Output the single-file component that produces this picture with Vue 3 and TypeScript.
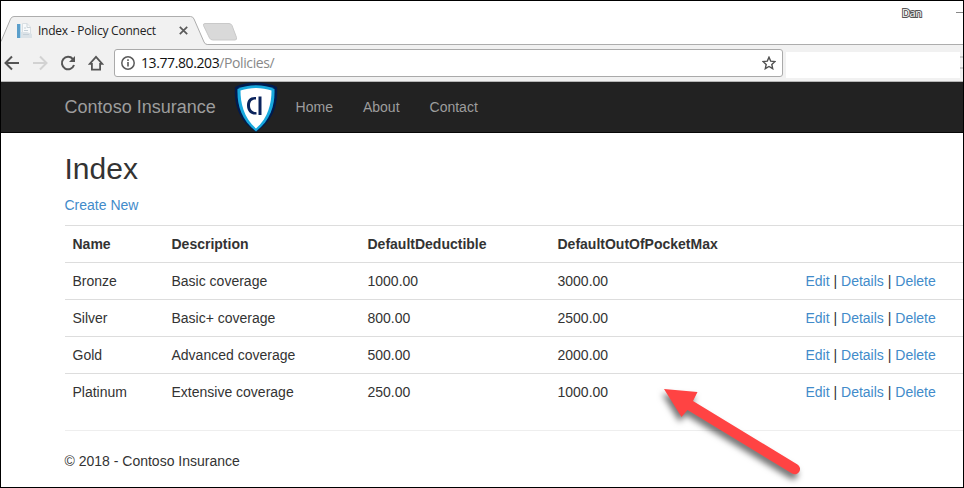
<script setup lang="ts">
interface Policy {
  name: string
  description: string
  deductible: string
  outOfPocketMax: string
}

const navLinks: string[] = ['Home', 'About', 'Contact']
const actions: string[] = ['Edit', 'Details', 'Delete']
const policies: Policy[] = [
  { name: 'Bronze', description: 'Basic coverage', deductible: '1000.00', outOfPocketMax: '3000.00' },
  { name: 'Silver', description: 'Basic+ coverage', deductible: '800.00', outOfPocketMax: '2500.00' },
  { name: 'Gold', description: 'Advanced coverage', deductible: '500.00', outOfPocketMax: '2000.00' },
  { name: 'Platinum', description: 'Extensive coverage', deductible: '250.00', outOfPocketMax: '1000.00' },
]
</script>

<template>
  <div class="window">
    <header class="tabstrip">
      <div class="tab">
        <svg class="tab-shape" width="240" height="29" viewBox="0 0 240 29">
          <path d="M0 29V25.5L9.500 3Q10.500 .5 13 .5H189.500Q192 .5 193 3L203 26Q204 28.500 206.500 28.500H240V29Z" fill="#f1f1f1" />
          <path d="M0 25.500L9.500 3Q10.500 .5 13 .5H189.500Q192 .5 193 3L203 26Q204 28.500 206.500 28.500H240" fill="none" stroke="#adadad" />
          <path d="M204 7.500H228Q230 7.500 231 9.500L235.500 21.500Q236 24 234 24H212Q209.500 24 208.500 22L202.500 9.500Q202 7.500 204 7.500Z" fill="#d9d9d9" stroke="#c9c9c9" />
        </svg>
        <div class="tab-content">
          <svg class="favicon" width="16" height="16" viewBox="0 0 16 16">
            <path d="M1 1H4V15H1Z" fill="#5b9fcb" />
            <path d="M4 1H5V15H4Z" fill="#b8d8ea" />
            <path d="M6.500 .5H11L14.500 4V12.500H6.500Z" fill="#f8fafb" stroke="#d9dfe3" />
            <path d="M11 .5V4.500H14.500" fill="none" stroke="#ccd4d9" />
            <path d="M5 9H11L16 11V15H5Z" fill="#dbe2e7" />
            <path d="M8 5H10M8 7.500H12M7 11.500H13" stroke="#c5d0d8" />
          </svg>
          <span class="tab-title">Index - Policy Connect</span>
          <svg class="close" width="9" height="9" viewBox="0 0 9 9"><path d="M.8 .8L8.200 8.200M8.200 .8L.8 8.200" stroke="#5a5a5a" stroke-width="1.700" /></svg>
        </div>
      </div>
      <div class="caption">
        <span class="user">Dan</span>
        <span class="minimize"></span>
      </div>
    </header>

    <div class="toolbar">
      <div class="controls">
        <svg width="16" height="16" viewBox="0 0 16 16"><path d="M15 8H2M8 1.500L1.500 8L8 14.500" fill="none" stroke="#555" stroke-width="2" /></svg>
        <svg width="16" height="16" viewBox="0 0 16 16"><path d="M1 8H14M8 1.500L14.500 8L8 14.500" fill="none" stroke="#d2d2d2" stroke-width="2" /></svg>
        <svg width="16" height="16" viewBox="0 0 16 16"><path d="M12.800 4A6.200 6.200 0 1 0 14 10" fill="none" stroke="#555" stroke-width="2" /><path d="M15 1V7H9Z" fill="#555" /></svg>
        <svg width="16" height="16" viewBox="0 0 16 16"><path d="M3.900 8.900V14.600H12.100V8.900H14.300L8 1.900L1.700 8.900Z" fill="none" stroke="#555" stroke-width="1.800" /></svg>
      </div>
      <div class="omnibox">
        <svg width="14" height="14" viewBox="0 0 14 14"><circle cx="7" cy="7" r="6.200" fill="none" stroke="#5a5a5a" stroke-width="1.500" /><path d="M7 6V10.500M7 3.200V4.900" stroke="#5a5a5a" stroke-width="1.600" /></svg>
        <span class="url">13.77.80.203<span class="path">/Policies/</span></span>
        <svg class="star" width="14" height="14" viewBox="0 0 14 14"><path d="M7 1.200L8.700 5.100L13 5.500L9.800 8.400L10.700 12.700L7 10.500L3.300 12.700L4.200 8.400L1 5.500L5.300 5.100Z" fill="none" stroke="#505050" stroke-width="1.400" /></svg>
      </div>
      <div class="extensions"></div>
      <div class="menu"><i></i><i></i></div>
    </div>

    <nav class="navbar">
      <a class="brand">Contoso Insurance</a>
      <svg class="logo" width="44" height="50" viewBox="0 0 44 50">
        <path d="M1 5C12 -1 32 -1 43 5C44 22 40 38 22 50C4 38 0 22 1 5Z" fill="#011b4e" />
        <path d="M3.500 7C14 2 30 2 40.500 7C41 22 37.500 37 22 49.500C6.500 37 3 22 3.500 7Z" fill="#18a8dd" />
        <path d="M6.500 8.500C16 5 28 5 37.500 8.500C37.500 21 34.500 35.500 22 46.500C9.500 35.500 6.500 21 6.500 8.500Z" fill="#fff" />
        <path d="M22 15C16 14.500 13 18 13 23.500C13 29.500 17 33 22.500 32.500V30.200C18 30 16 27 16 23.500C16 19.500 18 17.300 22 17.600Z" fill="#0a235c" />
        <path d="M24.500 14.500H27.500V33H24.500Z" fill="#0a235c" />
      </svg>
      <a v-for="link in navLinks" :key="link" class="nav-link">{{ link }}</a>
    </nav>

    <main class="content">
      <h2>Index</h2>
      <p><a class="link">Create New</a></p>
      <table>
        <colgroup><col class="c1"><col class="c2"><col class="c3"><col class="c4"><col></colgroup>
        <thead>
          <tr><th>Name</th><th>Description</th><th>DefaultDeductible</th><th>DefaultOutOfPocketMax</th><th></th></tr>
        </thead>
        <tbody>
          <tr v-for="policy in policies" :key="policy.name">
            <td>{{ policy.name }}</td>
            <td>{{ policy.description }}</td>
            <td>{{ policy.deductible }}</td>
            <td>{{ policy.outOfPocketMax }}</td>
            <td><template v-for="(action, i) in actions" :key="action"><template v-if="i > 0"> | </template><a class="link">{{ action }}</a></template></td>
          </tr>
        </tbody>
      </table>
      <hr>
      <footer>© 2018 - Contoso Insurance</footer>
    </main>

    <svg class="arrow" width="160" height="110" viewBox="0 0 160 110">
      <path d="M13 10L46.500 13L42 22L146.500 85.500A5.200 5.200 0 0 1 141 94.500L36.500 31L30.500 38Z" fill="#ff4343" />
    </svg>
  </div>
</template>

<style>
body { margin: 0; background: #fff; }
</style>

<style scoped>
* { box-sizing: border-box; }
.window { position: relative; width: 964px; height: 488px; border: 1px solid #000; overflow: hidden; background: #fff; color: #333; font: 14px/20px "Liberation Sans", Arial, sans-serif; }
.tabstrip { height: 44px; border-bottom: 1px solid #adadad; display: flex; justify-content: space-between; align-items: flex-end; }
.tab { display: grid; width: 240px; height: 29px; margin-bottom: -1px; }
.tab-shape, .tab-content { grid-area: 1 / 1; }
.tab-content { display: flex; align-items: center; width: 200px; height: 29px; padding-left: 15px; }
.favicon { flex: none; }
.tab-title { width: 130px; margin-left: 6px; font: 12px/16px "Open Sans", "Noto Sans", sans-serif; letter-spacing: -0.23px; color: #222; white-space: nowrap; }
.close { margin-left: 11px; }
.caption { display: flex; align-self: flex-start; padding-top: 4px; }
.user { width: 54px; font: 11px/15px "Open Sans", sans-serif; letter-spacing: -0.4px; color: #fff; -webkit-text-stroke: 2px #555; paint-order: stroke fill; }
.minimize { width: 7px; height: 1px; margin-top: 7px; background: #888; }
.toolbar { height: 37px; background: #f1f1f1; border-bottom: 1px solid #b6b6b6; display: flex; }
.controls { display: flex; gap: 12px; padding: 10px 0 0 3px; width: 113px; }
.omnibox { display: flex; align-items: center; width: 669px; height: 28px; margin-top: 4px; padding: 0 6px 0 6px; border: 1px solid #aaa; border-radius: 3px; background: #fff; }
.url { margin-left: 6px; font: 14px/20px "Open Sans", "Noto Sans", sans-serif; letter-spacing: -0.4px; color: #111; }
.path { color: #888; }
.star { margin-left: auto; }
.extensions { width: 174px; height: 26px; margin: 7px 0 0 3px; background: #fff; }
.menu { display: grid; align-content: start; gap: 9px; padding-top: 11px; }
.menu i { width: 3px; height: 2px; background: #ccc; }
.navbar { height: 51px; padding-left: 63.6px; display: flex; background: #222; border-bottom: 1px solid #080808; color: #9d9d9d; }
.brand { width: 169.4px; font-size: 18px; line-height: 50px; white-space: nowrap; }
.nav-link { line-height: 50px; margin-right: 30px; }
.logo { flex: none; margin-right: 17.6px; }
.content { padding-left: 64px; text-indent: -0.5px; }
h2 { margin: 19px 0 10px; font-size: 30px; line-height: 33px; font-weight: 400; }
p { margin: 0 0 10px; }
.link { color: #428bca; }
table { width: 900px; table-layout: fixed; border-collapse: collapse; margin-bottom: 19px; text-indent: -0.5px; }
.c1 { width: 99px; }
.c2 { width: 196px; }
.c3 { width: 190px; }
.c4 { width: 248px; }
th, td { height: 37px; padding: 8px; border-top: 1px solid #ddd; text-align: left; vertical-align: top; white-space: nowrap; }
hr { margin: 0 0 20px; border: 0; border-top: 1px solid #eee; }
.arrow { position: absolute; left: 650px; top: 378px; filter: drop-shadow(-2px 5px 3px rgba(0, 0, 0, 0.55)); }
</style>
